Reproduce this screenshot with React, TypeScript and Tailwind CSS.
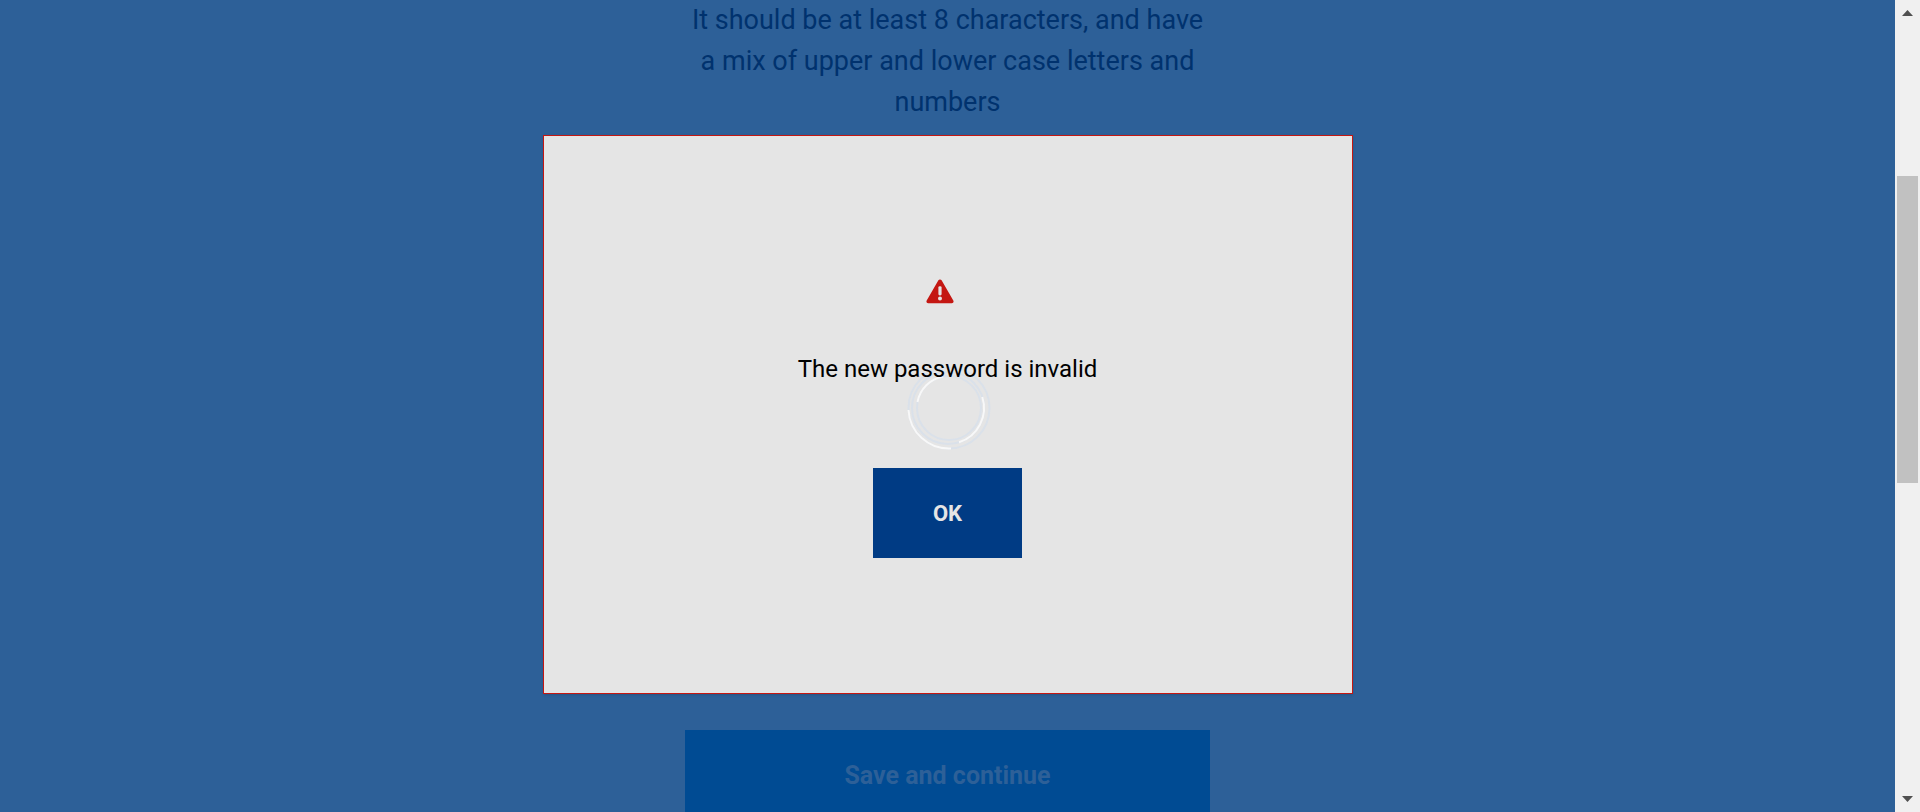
function Warning() {
  return (
    <svg viewBox="0 0 28 25" className="mr-4 h-[25px] w-7" aria-hidden="true">
      <path d="M12.4 1.3a1.9 1.9 0 0 1 3.2 0l11.7 20.3c.7 1.2 0 2.6-1.5 2.6H2.2c-1.5 0-2.2-1.4-1.5-2.6z" fill="#c41712" />
      <rect x="12.4" y="7.2" width="3.2" height="9.2" rx="1.4" fill="#e5e5e5" />
      <circle cx="14" cy="19.6" r="2" fill="#e5e5e5" />
    </svg>
  );
}

function Spinner() {
  return (
    <svg viewBox="-43 -42 84 84" className="h-21 w-21 overflow-visible" fill="none" strokeWidth="2" aria-hidden="true">
      <g stroke="#dae1ea">
        <circle r="40.5" />
        <circle cx="-1" r="36" />
        <circle r="32" />
      </g>
      <g stroke="#f8f8f8">
        <path d="M-40.5 2A40.5 40.5 0 0 0 2 40.5" />
        <path d="M33.3-11A36 36 0 0 1 10 34.3" />
        <path d="M-31.5-6A32 32 0 0 1-6-31.5" />
      </g>
    </svg>
  );
}

function ScrollTrack() {
  return (
    <div className="flex w-[25px] shrink-0 flex-col items-center justify-between bg-[#f0f0f0] pt-2.5 pb-2.5" aria-hidden="true">
      <svg viewBox="0 0 11 6" className="h-1.5 w-[11px]"><path d="M5.5 0 11 6H0z" fill="#505050" /></svg>
      <div className="mt-40 h-[307px] w-[21px] bg-[#c1c1c1]" />
      <div className="grow" />
      <svg viewBox="0 0 11 6" className="h-1.5 w-[11px]"><path d="M0 0h11L5.5 6z" fill="#505050" /></svg>
    </div>
  );
}

export default function App() {
  return (
    <div className="flex h-screen overflow-hidden bg-[#2d6098] font-['Roboto',sans-serif]">
      <main className="relative grow overflow-hidden">
        <form className="mx-auto flex h-full w-full max-w-[525px] flex-col" onSubmit={(e) => e.preventDefault()}>
          <p className="text-center text-[27px] leading-[41px] font-normal text-[#00326e]">
            It should be at least 8 characters, and have a mix of upper and lower case letters and numbers
          </p>
          <button type="submit" className="mt-auto -mb-3 h-[94px] shrink-0 bg-[#004b93] pb-0.5 text-[25px] font-bold text-[#2d6098]">
            Save and continue
          </button>
        </form>
        <div className="absolute inset-0 flex items-center justify-center pt-[17px]">
          <div
            role="alertdialog"
            aria-labelledby="message"
            className="relative flex h-[559px] w-full max-w-[810px] flex-col items-center border border-[#c41712] bg-[#e5e5e5] pt-[143px] shadow-sm"
          >
            <Warning />
            <div className="absolute top-[230px]"><Spinner /></div>
            <p id="message" className="relative mt-[47px] text-2xl leading-9 text-black">The new password is invalid</p>
            <button type="button" className="mt-[81px] h-[90px] w-[149px] bg-[#003b84] text-[22px] font-bold text-[#e5e5e5]">
              OK
            </button>
          </div>
        </div>
      </main>
      <ScrollTrack />
    </div>
  );
}
